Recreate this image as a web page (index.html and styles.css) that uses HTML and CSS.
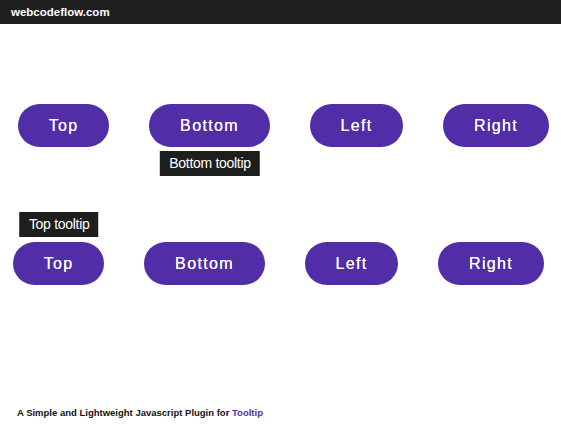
FILE: index.html
```html
<!DOCTYPE html>
<html lang="en">
<head>
<meta charset="utf-8">
<title>Tooltip</title>
<link rel="stylesheet" href="styles.css">
</head>
<body>
<header class="topbar">webcodeflow.com</header>
<main class="demo">
  <div class="row row-first">
    <button class="btn">Top</button>
    <button class="btn">Bottom<span class="tip tip-bottom">Bottom tooltip</span></button>
    <button class="btn">Left</button>
    <button class="btn">Right</button>
  </div>
  <div class="row row-second">
    <button class="btn">Top<span class="tip tip-top">Top tooltip</span></button>
    <button class="btn">Bottom</button>
    <button class="btn">Left</button>
    <button class="btn">Right</button>
  </div>
</main>
<footer class="credit">A Simple and Lightweight Javascript Plugin for <span class="accent">Tooltip</span></footer>
</body>
</html>
```

FILE: styles.css
```css
html, body {
  margin: 0;
  padding: 0;
  background: #ffffff;
}
body {
  width: 561px;
  height: 431px;
  overflow: hidden;
  font-family: "Liberation Sans", Arial, sans-serif;
}
.topbar {
  height: 24px;
  line-height: 24px;
  background: #1f1f1f;
  color: #ffffff;
  font-weight: bold;
  font-size: 11.5px;
  padding-left: 11px;
  box-sizing: border-box;
}
.demo {
  padding-top: 80px;
}
.row {
  display: flex;
  gap: 40px;
}
.row-first {
  padding-left: 18px;
}
.row-second {
  padding-left: 13px;
  margin-top: 95px;
}
.btn {
  position: relative;
  height: 43px;
  padding: 0 30.75px;
  border: none;
  border-radius: 22px;
  background: #512da8;
  color: #ffffff;
  font-family: "Liberation Sans", Arial, sans-serif;
  font-size: 16px;
  letter-spacing: 1.35px;
  cursor: pointer;
  text-shadow: 0 0 0.3px #ffffff;
}
.tip {
  position: absolute;
  left: 50%;
  transform: translateX(-50%);
  height: 25px;
  line-height: 25px;
  padding: 0 9px 0 10px;
  background: #1e1e1e;
  color: #ffffff;
  font-size: 14px;
  letter-spacing: -0.3px;
  white-space: nowrap;
  text-shadow: none;
}
.tip-bottom {
  top: calc(100% + 4px);
}
.tip-top {
  bottom: calc(100% + 5px);
}
.credit {
  margin-top: 122px;
  padding-left: 17px;
  font-size: 9.5px;
  font-weight: bold;
  color: #111111;
}
.accent {
  color: #512da8;
}
```
